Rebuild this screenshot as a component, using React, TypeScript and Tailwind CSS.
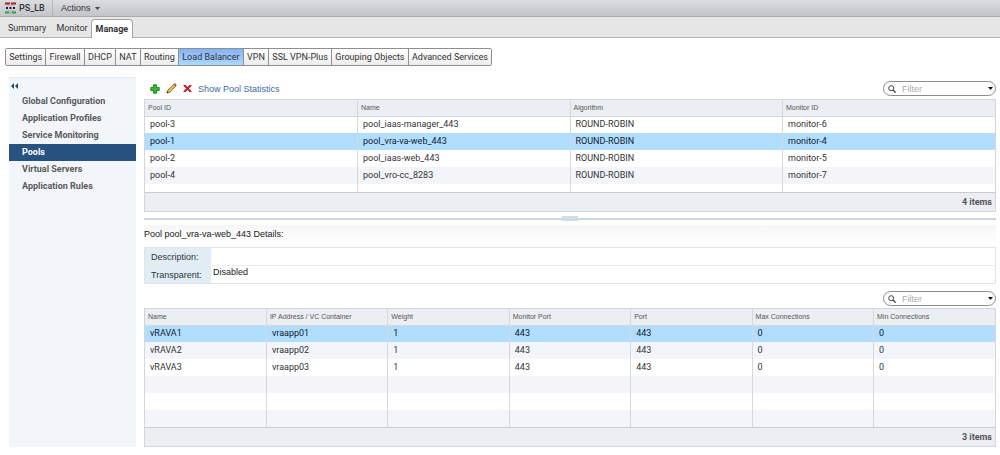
import { useId, useState } from "react";
import type { ReactNode } from "react";

const sections = [
  "Settings",
  "Firewall",
  "DHCP",
  "NAT",
  "Routing",
  "Load Balancer",
  "VPN",
  "SSL VPN-Plus",
  "Grouping Objects",
  "Advanced Services",
];

const menu = [
  "Global Configuration",
  "Application Profiles",
  "Service Monitoring",
  "Pools",
  "Virtual Servers",
  "Application Rules",
];

const pools = [
  ["pool-3", "pool_iaas-manager_443", "ROUND-ROBIN", "monitor-6"],
  ["pool-1", "pool_vra-va-web_443", "ROUND-ROBIN", "monitor-4"],
  ["pool-2", "pool_iaas-web_443", "ROUND-ROBIN", "monitor-5"],
  ["pool-4", "pool_vro-cc_8283", "ROUND-ROBIN", "monitor-7"],
];

const members = [
  ["vRAVA1", "vraapp01", "1", "443", "443", "0", "0"],
  ["vRAVA2", "vraapp02", "1", "443", "443", "0", "0"],
  ["vRAVA3", "vraapp03", "1", "443", "443", "0", "0"],
  ["", "", "", "", "", "", ""],
  ["", "", "", "", "", "", ""],
  ["", "", "", "", "", "", ""],
];

function EdgeIcon() {
  return (
    <svg width="11" height="12" viewBox="0 0 11 12" aria-hidden="true">
      <path d="M0 .5h5v2H0zM6 .5h5v2H6z" fill="#a3222b" />
      <path d="M1.500 3.500h8M1.500 8.500h8" stroke="#b9babd" />
      <path d="M1 5h2v2H1zM4.500 5h2v2h-2zM8 5h2v2H8z" fill="#1c1c1c" />
      <path d="M0 9.500h4v2H0zM7 9.500h4v2H7z" fill="#25a33a" />
      <path d="M4.500 9.500h2v2h-2z" fill="#9aa59c" />
    </svg>
  );
}

function AddIcon() {
  return (
    <svg width="10" height="10" viewBox="0 0 10 10" aria-hidden="true">
      <path
        d="M3.500 .8h3v2.700h2.700v3H6.500v2.700h-3V6.500H.8v-3h2.700z"
        fill="#35b835"
        stroke="#12801c"
        strokeWidth=".9"
        strokeLinejoin="round"
      />
    </svg>
  );
}

function EditIcon() {
  return (
    <svg width="11" height="11" viewBox="0 0 11 11" aria-hidden="true">
      <path d="M1 10l.7-2.700L8 1l2 2-6.300 6.300z" fill="#e9b93f" stroke="#7a5a1c" strokeWidth=".7" />
      <path d="M7.300 1.700L8.400.6q.6-.5 1.200 0l.8.8q.5.6 0 1.200L9.300 3.700z" fill="#a8685c" />
      <path d="M.7 10.300l.6-2 1.500 1.500z" fill="#222" />
    </svg>
  );
}

function DeleteIcon() {
  return (
    <svg width="9" height="9" viewBox="0 0 9 9" aria-hidden="true">
      <path d="M1.500 1.500l6 6M7.500 1.500l-6 6" stroke="#c3222a" strokeWidth="2" />
      <path d="M.5 1.500h2M6.500 1.500h2M.5 7.500h2M6.500 7.500h2" stroke="#c3222a" />
    </svg>
  );
}

function Filter() {
  const id = useId();
  return (
    <div className="flex h-[15px] w-[113px] items-center rounded-full border border-[#8d8d8d] bg-white pr-0.5 pl-1">
      <label htmlFor={id} aria-label="Filter" className="shrink-0">
        <svg width="8" height="8" viewBox="0 0 8 8" aria-hidden="true">
          <circle cx="3.200" cy="3.200" r="2.500" fill="none" stroke="#444" />
          <path d="M5 5l2.600 2.600" stroke="#444" strokeWidth="1.300" />
        </svg>
      </label>
      <input
        id={id}
        placeholder="Filter"
        className="ml-1.5 min-w-0 flex-1 bg-transparent text-[9px] leading-3 text-[#333] outline-none placeholder:text-[#adadad]"
      />
      <button type="button" aria-label="Filter options">
        <svg width="5" height="3" viewBox="0 0 5 3" aria-hidden="true">
          <path d="M0 0h5L2.500 3z" fill="#111" />
        </svg>
      </button>
    </div>
  );
}

type GridProps = {
  columns: string[];
  rows: string[][];
  selected: number;
  onSelect: (row: number) => void;
  footer: string;
  children?: ReactNode;
};

function DataGrid({ columns, rows, selected, onSelect, footer, children }: GridProps) {
  return (
    <div className="border border-[#d3d5d8]">
      <table className="w-full table-fixed border-collapse">
        <thead>
          <tr className="h-4 bg-[#ebeef2]">
            {columns.map((c) => (
              <th
                key={c}
                className="border-r border-b border-[#d6d8db] p-0 pl-[3px] text-left text-[7px] leading-3 font-normal text-[#555] last:border-r-0"
              >
                {c}
              </th>
            ))}
          </tr>
        </thead>
        <tbody>
          {rows.map((row, r) => (
            <tr
              key={r}
              onClick={() => row[0] && onSelect(r)}
              className={
                "h-[17px] " +
                (r === selected
                  ? "bg-[#b1deff] text-[#10202c]"
                  : r % 2
                    ? "bg-[#f2f6fb]"
                    : "bg-white")
              }
            >
              {row.map((cell, c) => (
                <td
                  key={c}
                  className="border-r border-[#d6d8db] p-0 pb-0.5 pl-[5px] font-[Roboto,'Liberation_Sans',sans-serif] leading-3 last:border-r-0"
                >
                  {cell}
                </td>
              ))}
            </tr>
          ))}
          {children}
        </tbody>
      </table>
      <div className="flex h-[19px] items-center justify-end border-t border-[#c9cccf] bg-[#ebeef2] pr-[3px] font-[Roboto,'Liberation_Sans',sans-serif] font-bold text-[#555]">
        {footer}
      </div>
    </div>
  );
}

export default function App() {
  const [section, setSection] = useState("Load Balancer");
  const [item, setItem] = useState("Pools");
  const [pool, setPool] = useState(1);
  const [member, setMember] = useState(0);

  return (
    <div className="bg-white font-['Liberation_Sans',Arial,sans-serif] text-[9px] leading-3 text-[#333]">
      <header className="flex h-[17px] items-center border-b border-[#a9aaad] bg-linear-to-b from-[#dcdde1] to-[#c3c4c9]">
        <div className="flex h-full w-[53px] items-center gap-[3px] border-r border-[#b4b5b9] pl-[5px]">
          <EdgeIcon />
          <h1 className="font-[Roboto,'Liberation_Sans',sans-serif] font-medium">PS_LB</h1>
        </div>
        <button type="button" className="flex items-center gap-1 pl-2">
          Actions
          <svg width="5" height="3" viewBox="0 0 5 3" aria-hidden="true">
            <path d="M0 0h5L2.500 3z" fill="#444" />
          </svg>
        </button>
      </header>

      <nav className="flex h-[21px] items-end border-b border-[#b3b3b3] bg-[#e6e6e6] font-[Roboto,'Liberation_Sans',sans-serif]">
        <a href="#summary" className="flex h-[18px] items-center pl-2">
          Summary
        </a>
        <a href="#monitor" className="flex h-[18px] items-center pl-[10px]">
          Monitor
        </a>
        <a
          href="#manage"
          aria-current="page"
          className="-mb-px ml-[3px] flex h-[19px] items-center rounded-t border border-b-0 border-[#a5a5a5] bg-white px-1 font-bold"
        >
          Manage
        </a>
      </nav>

      <div className="flex px-[5px] pt-[10px]">
        <div className="flex h-[18px] min-w-[487px] overflow-hidden rounded-[2px] border border-[#8f8f8f] font-[Roboto,'Liberation_Sans',sans-serif]">
          {sections.map((s) => (
            <button
              key={s}
              type="button"
              onClick={() => setSection(s)}
              className={
                "grow border-r border-[#8f8f8f] px-[3px] whitespace-nowrap last:border-r-0 " +
                (s === section
                  ? "bg-linear-to-b from-[#84b2f5] to-[#aed8fd]"
                  : "bg-linear-to-b from-white to-[#ececec]")
              }
            >
              {s}
            </button>
          ))}
        </div>
      </div>

      <div className="flex gap-2 pt-[11px] pr-1 pb-2 pl-[9px]">
        <aside className="w-[127px] shrink-0 border-t border-[#e4e9ee] bg-[#f2f6fb]">
          <button
            type="button"
            aria-label="Collapse menu"
            className="flex h-[15px] items-center pl-0.5"
          >
            <svg width="7" height="6" viewBox="0 0 7 6" aria-hidden="true">
              <path d="M3 0v6L0 3zM7 0v6L4 3z" fill="#1d4878" />
            </svg>
          </button>
          <nav className="flex flex-col font-[Roboto,'Liberation_Sans',sans-serif] font-bold text-[#5a5a5a]">
            {menu.map((m) => (
              <button
                key={m}
                type="button"
                onClick={() => setItem(m)}
                className={
                  "h-[17px] pb-0.5 pl-[13px] text-left " +
                  (m === item ? "bg-[#28527f] text-white" : "")
                }
              >
                {m}
              </button>
            ))}
          </nav>
        </aside>

        <main className="min-w-0 flex-1">
          <div className="flex h-[22px] items-center justify-between pt-px">
            <div className="flex items-center gap-1.5 pl-1.5">
              <button type="button" aria-label="Add pool">
                <AddIcon />
              </button>
              <button type="button" aria-label="Edit pool">
                <EditIcon />
              </button>
              <button type="button" aria-label="Delete pool">
                <DeleteIcon />
              </button>
              <a href="#statistics" className="text-[#3d6aa0]">
                Show Pool Statistics
              </a>
            </div>
            <Filter />
          </div>

          <DataGrid
            columns={["Pool ID", "Name", "Algorithm", "Monitor ID"]}
            rows={pools}
            selected={pool}
            onSelect={setPool}
            footer="4 items"
          >
            <tr className="h-2">
              {[0, 1, 2, 3].map((c) => (
                <td key={c} className="border-r border-[#d6d8db] p-0 last:border-r-0" />
              ))}
            </tr>
          </DataGrid>

          <div className="flex h-[13px] items-center" role="separator">
            <div className="h-0.5 flex-1 bg-[#cdd7e1]" />
            <div className="h-[5px] w-4 bg-[#d0dde9]" />
            <div className="h-0.5 flex-1 bg-[#cdd7e1]" />
          </div>

          <h2 className="flex h-[22px] items-center bg-linear-to-b from-[#f6f6f6] to-white pb-1 text-[#222]">
            Pool {pools[pool][1]} Details:
          </h2>
          <dl className="grid grid-cols-[66px_1fr] border border-[#e3e3e3]">
            <dt className="flex h-[17px] items-center bg-[#e1edf5] pl-1.5">Description:</dt>
            <dd className="h-[17px]" />
            <dt className="flex h-[18px] items-center border-t border-[#ececec] bg-[#e1edf5] pl-1.5">
              Transparent:
            </dt>
            <dd className="h-[18px] border-t border-[#ececec] pl-0.5 text-[#222]">Disabled</dd>
          </dl>

          <div className="flex justify-end pt-[7px] pb-[2px]">
            <Filter />
          </div>

          <DataGrid
            columns={[
              "Name",
              "IP Address / VC Container",
              "Weight",
              "Monitor Port",
              "Port",
              "Max Connections",
              "Min Connections",
            ]}
            rows={members}
            selected={member}
            onSelect={setMember}
            footer="3 items"
          />
        </main>
      </div>
    </div>
  );
}
